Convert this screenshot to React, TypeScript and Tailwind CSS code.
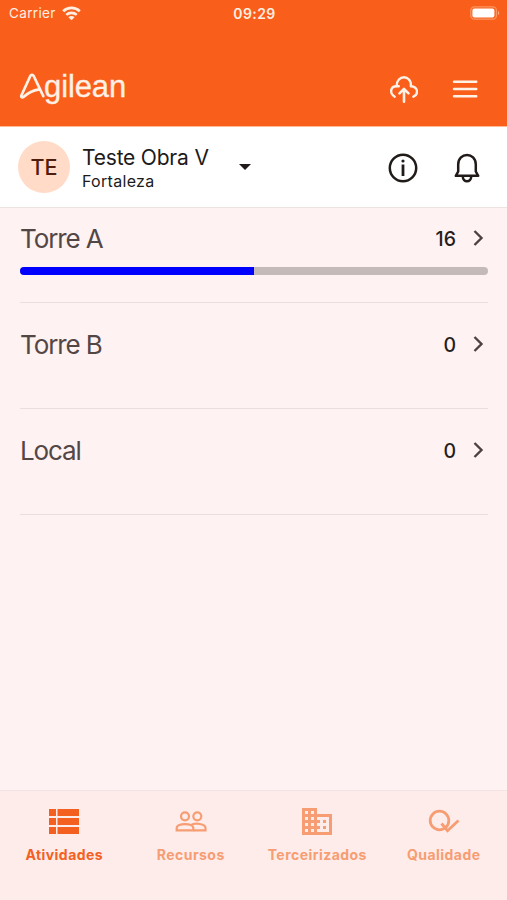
import type { ReactNode } from 'react';
import clsx from 'clsx';

type Place = {
	name: string;
	count: number;
	progress?: number;
};

const places: Place[] = [
	{ name: 'Torre A', count: 16, progress: 50 },
	{ name: 'Torre B', count: 0 },
	{ name: 'Local', count: 0 },
];

function StatusBar() {
	return (
		<div className="grid h-7 grid-cols-3 items-center pl-[9px] pr-[7px] text-[#ffeee2]">
			<div className="flex items-center gap-[6px]">
				<span className="text-[13.5px] leading-none tracking-[0.35px]">Carrier</span>
				<svg className="-mt-[2px]" width="19" height="15" viewBox="0 0 19 15" fill="none" stroke="currentColor" strokeWidth="2.7">
					<path d="M1.2 5.3a12 12 0 0 1 16.6 0" />
					<path d="M4.3 8.9a7.5 7.5 0 0 1 10.4 0" />
					<path d="M9.5 14.2 6.4 11.2a4.4 4.4 0 0 1 6.2 0Z" fill="currentColor" stroke="none" />
				</svg>
			</div>
			<span className="text-center text-[14px] font-semibold leading-none tracking-[0.4px]">
				09:29
			</span>
			<svg className="-mt-[2px] justify-self-end" width="30" height="14" viewBox="0 0 30 14" fill="none">
				<rect x="0.8" y="0.8" width="25.6" height="12.4" rx="3.6" stroke="#fc9661" strokeWidth="1.3" />
				<rect x="2.4" y="2.4" width="22" height="9.2" rx="2" fill="#fff" />
				<path d="M28 5v4a2.2 2.2 0 0 0 0-4Z" fill="#fda879" />
			</svg>
		</div>
	);
}

function Logo() {
	return (
		<div className="flex items-start text-[#fff1e6]">
			<svg width="26" height="36" viewBox="0 0 26 36" fill="none" stroke="currentColor" strokeWidth="2.7" strokeLinecap="round" strokeLinejoin="round">
				<path d="M24.3 26.2 14.7 6c-.7-1.5-2.7-1.5-3.4 0L2.5 25.2c-.8 1.9.7 3 2.3 1.6C9 22.7 14 20.3 20.200 19.3" />
			</svg>
			<span className="-ml-px text-[31px] leading-[34px] tracking-[-0.1px] font-['Liberation_Sans',sans-serif] [-webkit-text-stroke:0.3px_currentColor]">
				gilean
			</span>
		</div>
	);
}

function Header() {
	return (
		<header className="h-[127px] shrink-0 border-b border-[#fdba94] bg-[#f95f1b]">
			<StatusBar />
			<div className="flex justify-between pl-[19px] pr-[29px] pt-[42px]">
				<Logo />
				<div className="flex gap-[34px] pt-[5px] text-[#fff1e6]">
					<svg width="29" height="29" viewBox="0 0 29 29" fill="none" stroke="currentColor" strokeWidth="2.4" strokeLinecap="round" strokeLinejoin="round">
						<path d="M5.7 21.7C.3 18.5 1.2 11.3 7.5 11.2h2.3" />
						<path d="M7.7 11c-.3-11.600 15-11.600 14.200 0" />
						<path d="M21.900 11.200c7 .4 8.200 7.800 2.500 10.500" />
						<path d="M15 26.8V14.5M10.5 18.3l4.500-4.500 4.500 4.500" strokeWidth="2.6" />
					</svg>
					<svg width="26" height="29" viewBox="0 0 26 29" fill="none" stroke="currentColor" strokeWidth="2.4" strokeLinecap="round">
						<path d="M2 6.7h22.3M2 14h22.3M2 21.3h22.3" />
					</svg>
				</div>
			</div>
		</header>
	);
}

function ProjectBar() {
	return (
		<div className="flex h-[81px] shrink-0 items-center border-b border-[#eee3e3] bg-white pl-[18px] pr-[27px] text-[#201a19]">
			<div className="flex size-[52px] items-center justify-center rounded-full bg-[#ffdbc8] text-[21.5px] font-medium tracking-[-0.1px] text-[#4f1d0d]">
				TE
			</div>
			<div className="ml-3 w-[157px] pt-[3px]">
				<div className="text-[21px] leading-[26px] tracking-[-0.2px]">Teste Obra V</div>
				<div className="text-[16px] leading-[21px] tracking-[0.3px]">Fortaleza</div>
			</div>
			<svg width="12" height="6" viewBox="0 0 12 6" fill="currentColor">
				<path d="M0 0h12L6 6Z" />
			</svg>
			<div className="ml-auto flex gap-[35px] pt-[2px]">
				<svg className="-ml-px mr-px" width="30" height="30" viewBox="0 0 30 30" fill="none" stroke="currentColor" strokeWidth="2.5">
					<circle cx="15" cy="15" r="13.2" />
					<path d="M15 11.5V23" strokeWidth="2.8" />
					<circle cx="15" cy="8" r="1.6" fill="currentColor" stroke="none" />
				</svg>
				<svg width="26" height="30" viewBox="0 0 26 30" fill="none" stroke="currentColor" strokeWidth="2.5" strokeLinejoin="round">
					<path d="M1.8 22.8h22.4L21.8 18.5v-7c0-12.7-17.6-12.7-17.6 0v7Z" />
					<path d="M8.8 23.5c0 6.3 8.4 6.3 8.4 0" />
				</svg>
			</div>
		</div>
	);
}

function PlaceRow({ name, count, progress }: Place) {
	return (
		<li className="h-[106px] border-b border-[#eadfdf] pt-[26px]">
			<div className="flex h-8 items-center">
				<span className="text-[26px] leading-8 tracking-[-1.1px] text-[#534746]">{name}</span>
				<span className="ml-auto text-[19.5px] font-medium leading-8 text-[#251e1d]">{count}</span>
				<svg className="-mt-[2px] ml-[17px] mr-[4px]" width="11" height="18" viewBox="0 0 11 18" fill="none" stroke="#4d4241" strokeWidth="2.4">
					<path d="m1.5 2 7 7-7 7" />
				</svg>
			</div>
			{progress !== undefined && (
				<div className="mt-[12px] h-[7.5px] overflow-hidden rounded-full bg-[#c3bab9]">
					<div className="h-full bg-[#0000ff]" style={{ width: `${progress}%` }} />
				</div>
			)}
		</li>
	);
}

function Tab({ label, active, children }: { label: string; active?: boolean; children: ReactNode }) {
	return (
		<button
			className={clsx(
				'flex flex-col items-center pt-[14px]',
				active ? 'text-[#f4601f]' : 'text-[#f79d73]',
			)}
		>
			<svg width="34" height="34" viewBox="0 0 34 34" fill="none" stroke="currentColor">
				{children}
			</svg>
			<span className="mt-[6px] text-[14px] font-bold leading-5 tracking-[0.45px]">{label}</span>
		</button>
	);
}

function TabBar() {
	return (
		<nav className="grid h-[110px] shrink-0 grid-cols-4 border-t border-[#f3e4e3] bg-[#fdecea] pl-px">
			<Tab label="Atividades" active>
				<path
					d="M2 4h7v7H2zM10.500 4H32v7H10.500zM2 13h7v7H2zM10.500 13H32v7H10.500zM2 22h7v7H2zM10.500 22H32v7H10.500z"
					fill="currentColor"
					stroke="none"
				/>
			</Tab>
			<Tab label="Recursos">
				<g strokeWidth="2.2">
					<circle cx="11" cy="11.3" r="4" />
					<circle cx="23.3" cy="11.3" r="4" />
					<path d="M2.7 25.3V23c0-5.3 16.6-5.3 16.6 0v2.3Z" />
					<path d="M16.5 20.1c5-2.7 15-1.3 15 2.9v2.3H19.3" />
				</g>
			</Tab>
			<Tab label="Terceirizados">
				<path
					d="M17 9V3H2v27h30V9H17ZM8 27H5v-3h3v3Zm0-6H5v-3h3v3Zm0-6H5v-3h3v3Zm0-6H5V6h3v3Zm6 18h-3v-3h3v3Zm0-6h-3v-3h3v3Zm0-6h-3v-3h3v3Zm0-6h-3V6h3v3Zm15 18H17v-3h3v-3h-3v-3h3v-3h-3v-3h12v15Zm-3-12h-3v3h3v-3Zm0 6h-3v3h3v-3Z"
					fill="currentColor"
					stroke="none"
				/>
			</Tab>
			<Tab label="Qualidade">
				<circle cx="12.5" cy="15.5" r="9.3" strokeWidth="2.8" />
				<path d="m14.5 18.5 6 7.200L31.500 15.500" strokeWidth="2.8" />
			</Tab>
		</nav>
	);
}

export default function App() {
	return (
		<div className="flex h-[900px] w-[507px] flex-col bg-[#fff2f2] font-[Inter,sans-serif]">
			<Header />
			<ProjectBar />
			<main className="min-h-0 flex-1 overflow-hidden pl-[20px] pr-[19px]">
				<ul className="-mt-[11px]">
					{places.map((place) => (
						<PlaceRow key={place.name} {...place} />
					))}
				</ul>
			</main>
			<TabBar />
		</div>
	);
}
